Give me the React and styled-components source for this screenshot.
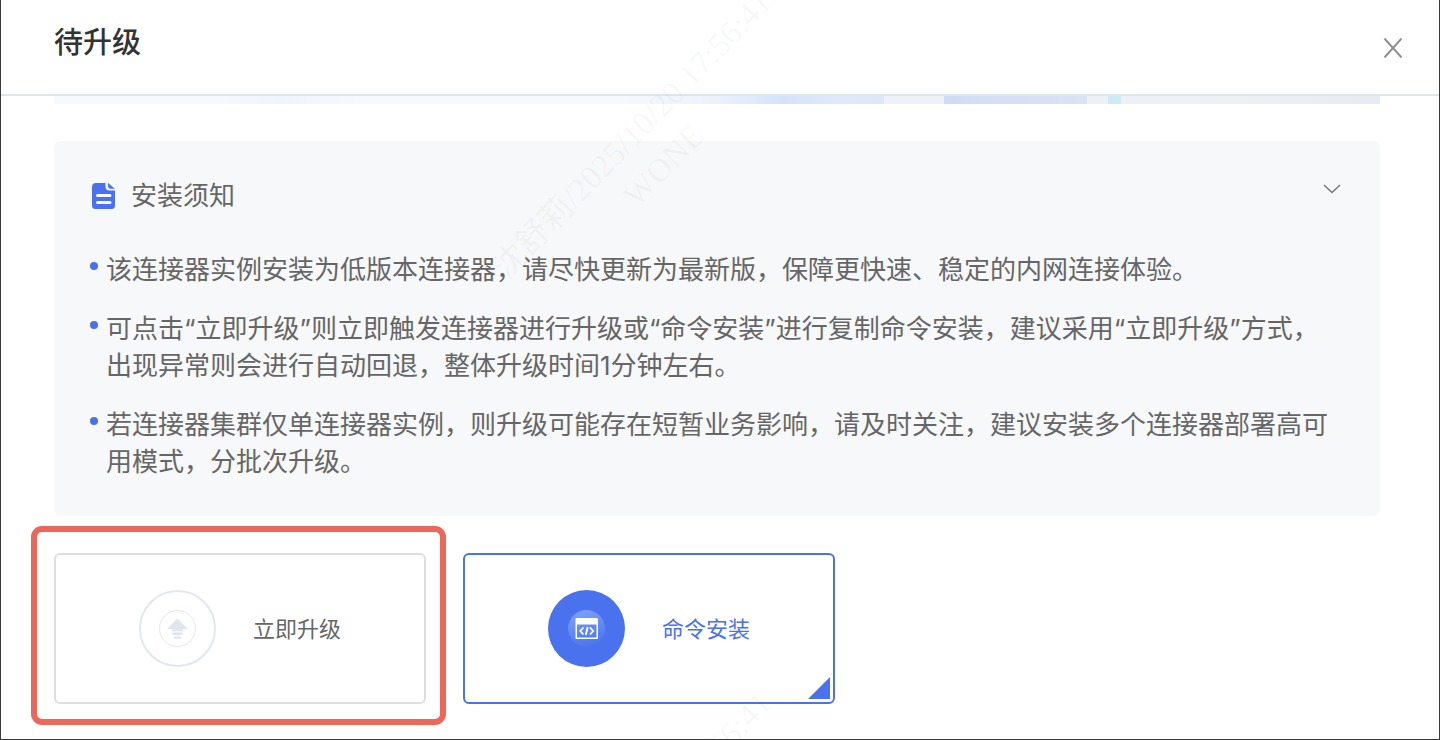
import React, { useState } from 'react'
import styled, { createGlobalStyle } from 'styled-components'

const GlobalStyle = createGlobalStyle`
  * {
    box-sizing: border-box;
    margin: 0;
    padding: 0;
  }

  body {
    background-color: #fff;
    color: #666;
    font-family: Inter, 'Noto Sans CJK SC', sans-serif;
  }

  button {
    border: none;
    background: none;
    color: inherit;
    cursor: pointer;
  }
`

const Drawer = styled.div`
  position: relative;
  min-height: 100vh;
  overflow: hidden;
  border: 1px solid #3a3a3d;
  border-top: none;
`

const Header = styled.header`
  display: flex;
  align-items: center;
  justify-content: space-between;
  height: 96px;
  padding: 2px 34px 0 53px;
  border-bottom: 2px solid #e0e5ed;
`

const Title = styled.h1`
  padding-bottom: 10px;
  color: #333;
  font-size: 29px;
  font-weight: 500;
  line-height: 36px;
`

const IconButton = styled.button`
  display: flex;
  align-items: center;
  justify-content: center;
  width: 24px;
  height: 24px;
`

const Content = styled.main`
  padding: 0 59px 35px 53px;
`

const Banner = styled.div`
  height: 8px;
  background: linear-gradient(
    to right,
    #f6f9fe 0%,
    #f6f9fe 12%,
    #f0f4fe 17%,
    #f6f9fe 23%,
    #f6faff 42%,
    #ecf2fc 50%,
    #d4e3fa 55%,
    #dfe9fa 59%,
    #dde7f7 62.6%,
    #eef2f8 62.6%,
    #eef2f8 67.1%,
    #cfdcf6 67.1%,
    #d4def7 70%,
    #dae3f2 77.9%,
    #edf1f6 77.9%,
    #edf1f6 79.5%,
    #cdebf5 79.5%,
    #cdebf5 80.5%,
    #edf1f6 80.5%,
    #eef0f4 89%,
    #e7ebf1 100%
  );
`

const Notice = styled.section`
  margin: 37px 0;
  padding: 36px;
  border-radius: 6px;
  background-color: #f7f8fa;
  font-size: 26px;
  line-height: 37px;
`

const NoticeHead = styled.div`
  display: flex;
  align-items: flex-start;
  justify-content: space-between;
  margin-bottom: 37px;
`

const NoticeTitle = styled.h2`
  display: flex;
  align-items: center;
  gap: 15px;
  font-size: 26px;
  font-weight: 400;
`

const NoticeList = styled.ul`
  display: flex;
  flex-direction: column;
  gap: 22px;
  list-style: none;
`

const NoticeItem = styled.li`
  display: flex;
  gap: 8px;

  &::before {
    content: '';
    flex: none;
    width: 8px;
    height: 8px;
    margin-top: 11px;
    border-radius: 50%;
    background-color: #4a72ee;
  }
`

const Options = styled.div`
  display: flex;
  gap: 37px;
`

const Option = styled.label`
  position: relative;
  display: flex;
  align-items: center;
  justify-content: center;
  gap: 37px;
  width: 372px;
  padding: 35px 0;
  border: 2px solid ${({ $active }) => ($active ? '#4a72ee' : '#dedede')};
  border-radius: 6px;
  color: ${({ $active }) => ($active ? '#4a72ee' : '#666')};
  font-size: 22px;
  line-height: 32px;
  cursor: pointer;

  input {
    position: absolute;
    opacity: 0;
  }

  svg {
    flex: none;
  }
`

const Corner = styled.span`
  position: absolute;
  right: 3px;
  bottom: 3px;
  width: 22px;
  height: 22px;
  background-color: #4a72ee;
  clip-path: polygon(100% 0, 100% 100%, 0 100%);
`

const Highlight = styled.span`
  position: absolute;
  inset: -29px -22px -23px -25px;
  border: 6px solid #eb6759;
  border-radius: 11px;
  pointer-events: none;
`

const Watermark = styled.div`
  position: absolute;
  top: ${({ $top }) => $top};
  left: 45%;
  color: rgba(0, 0, 0, 0.04);
  font-family: 'Liberation Serif', 'Noto Sans CJK SC', serif;
  font-size: 33px;
  line-height: 44px;
  text-align: center;
  white-space: nowrap;
  transform: translate(-50%, -50%) rotate(-46deg);
  pointer-events: none;
`

const CloseIcon = () => (
  <svg width='20' height='20' viewBox='0 0 20 20' fill='none' stroke='#8f8f8f' strokeWidth='2'>
    <path d='M1.5 .5L18.5 19.5M18.5 .5L1.5 19.5' />
  </svg>
)

const ChevronIcon = () => (
  <svg width='18' height='10' viewBox='0 0 18 10' fill='none' stroke='#777' strokeWidth='1.5'>
    <path d='M1 1L9 8.5L17 1' />
  </svg>
)

const DocIcon = () => (
  <svg width='26' height='28' viewBox='0 0 26 28'>
    <path fill='#4a72ee' d='M6 1h9.500v3.500a4 4 0 0 0 4 4H25V23.500a3.500 3.500 0 0 1-3.500 3.500H5.500A3.500 3.500 0 0 1 2 23.500V5a4 4 0 0 1 4-4z' />
    <path fill='#4a72ee' d='M18 1l7 5.800h-4a3 3 0 0 1-3-3z' />
    <path stroke='#f7f8fa' strokeWidth='3' strokeLinecap='round' d='M7.500 13.500h12.500M7.500 20.500h12.500' />
  </svg>
)

const UpgradeIcon = () => (
  <svg width='77' height='77' viewBox='0 0 77 77' fill='none'>
    <circle cx='38.5' cy='38.5' r='37.5' stroke='#e4e7ef' strokeWidth='2' />
    <circle cx='38.5' cy='38.5' r='18' stroke='#e4e7ef' />
    <path fill='#e0e4ec' d='M38.5 28.500L49 39h-5.200v2.200H33.200V39H28z' />
    <path stroke='#e0e4ec' strokeWidth='2.4' strokeLinecap='round' d='M34.500 43.800h8M36 47.600h5' />
  </svg>
)

const CommandIcon = () => (
  <svg width='77' height='77' viewBox='0 0 77 77' fill='none'>
    <defs>
      <linearGradient id='glow' x1='0.35' y1='0' x2='0.65' y2='1'>
        <stop offset='0' stopColor='#7ba1f5' />
        <stop offset='1' stopColor='#4a72ee' />
      </linearGradient>
    </defs>
    <circle cx='38.5' cy='38.5' r='38.5' fill='#4a72ee' />
    <circle cx='38.5' cy='38.5' r='18.5' fill='url(#glow)' />
    <path fill='#fff' fillRule='evenodd' d='M28.500 28h20.500a1 1 0 0 1 1 1v19a1 1 0 0 1-1 1H28.500a1 1 0 0 1-1-1V29a1 1 0 0 1 1-1zM29 34.500V47.500h19.500V34.500z' />
    <path stroke='#fff' strokeWidth='1.8' d='M35.500 37.500L32.300 41L35.500 44.500M42 37.500L45.200 41L42 44.500M39.700 37L37.800 45' />
  </svg>
)

const notices = [
  '该连接器实例安装为低版本连接器，请尽快更新为最新版，保障更快速、稳定的内网连接体验。',
  '可点击“立即升级”则立即触发连接器进行升级或“命令安装”进行复制命令安装，建议采用“立即升级”方式，出现异常则会进行自动回退，整体升级时间1分钟左右。',
  '若连接器集群仅单连接器实例，则升级可能存在短暂业务影响，请及时关注，建议安装多个连接器部署高可用模式，分批次升级。',
]

const options = [
  { id: 'upgrade', label: '立即升级', Icon: UpgradeIcon, highlight: true },
  { id: 'command', label: '命令安装', Icon: CommandIcon },
]

function App() {
  const [selected, setSelected] = useState('command')

  return (
    <>
      <GlobalStyle />
      <Drawer>
        <Header>
          <Title>待升级</Title>
          <IconButton aria-label='关闭'><CloseIcon /></IconButton>
        </Header>

        <Content>
          <Banner />

          <Notice>
            <NoticeHead>
              <NoticeTitle><DocIcon /> 安装须知</NoticeTitle>
              <IconButton aria-label='收起'><ChevronIcon /></IconButton>
            </NoticeHead>
            <NoticeList>
              {notices.map(text => <NoticeItem key={text}><p>{text}</p></NoticeItem>)}
            </NoticeList>
          </Notice>

          <Options>
            {options.map(({ id, label, Icon, highlight }) => (
              <Option key={id} $active={selected === id}>
                <input
                  type='radio'
                  name='method'
                  checked={selected === id}
                  onChange={() => setSelected(id)}
                />
                <Icon />
                <span>{label}</span>
                {selected === id && <Corner />}
                {highlight && <Highlight />}
              </Option>
            ))}
          </Options>
        </Content>

        <Watermark $top='150px' aria-hidden='true'>
          沈舒莉/2025/10/20 17:56:41<br />WONE
        </Watermark>
        <Watermark $top='851px' aria-hidden='true'>
          沈舒莉/2025/10/20 17:56:41<br />WONE
        </Watermark>
      </Drawer>
    </>
  )
}

export default App
